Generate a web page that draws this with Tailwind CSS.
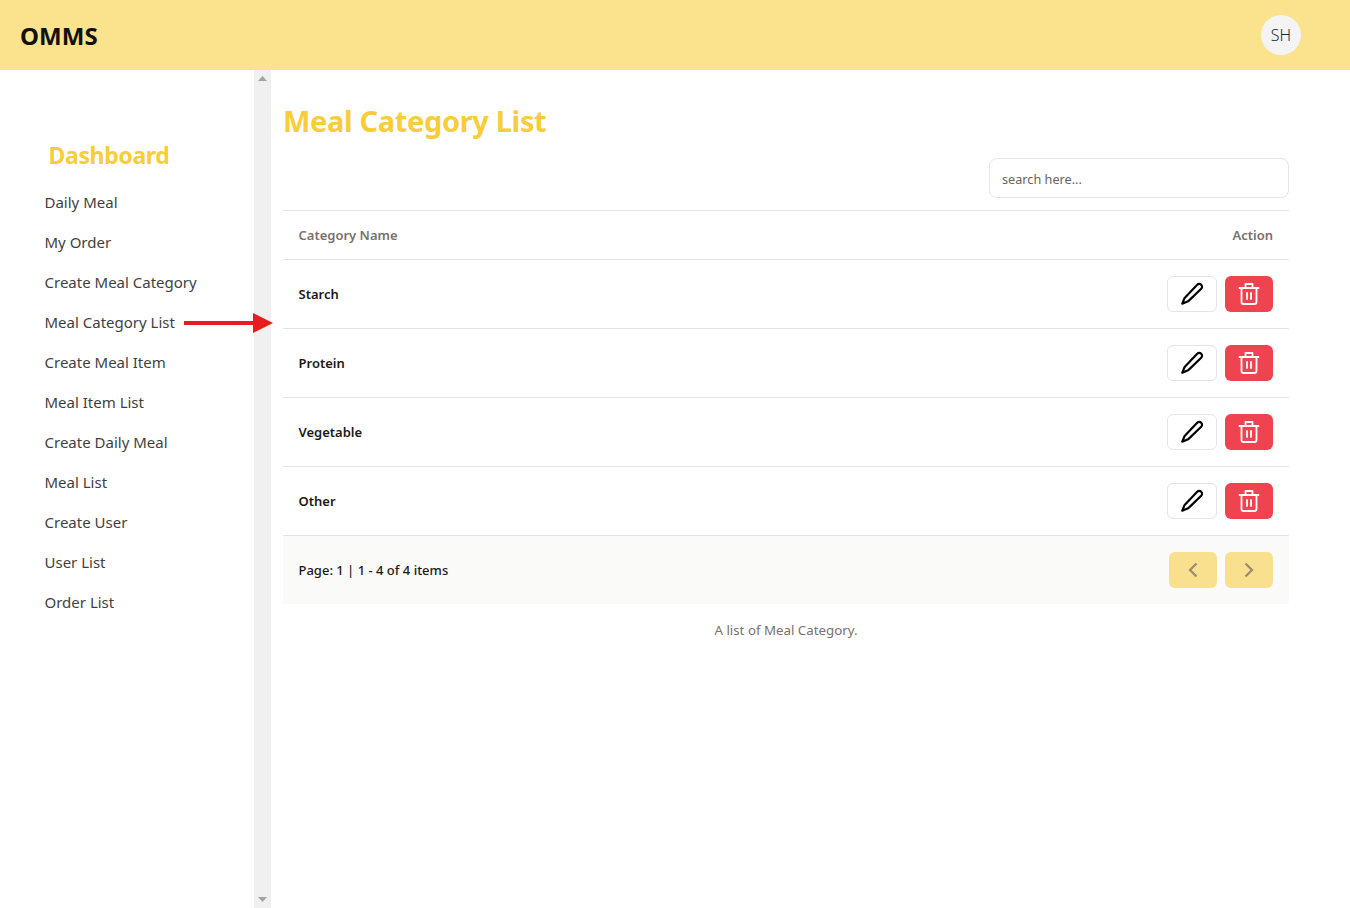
<!DOCTYPE html>
<html><head><meta charset="utf-8"><script src="https://cdn.jsdelivr.net/npm/@tailwindcss/browser@4"></script></head>
<body class="font-['Noto_Sans',sans-serif] bg-white">
<div class="relative w-[1350px] h-[908px] overflow-hidden flex flex-col">
  <header class="h-[70px] bg-[#fbe28c] flex items-center justify-between pl-[20px] pr-[49px] shrink-0">
    <span class="mt-[2px] text-[24px] tracking-[0.1px] font-bold text-[#111]">OMMS</span>
    <div class="w-10 h-10 rounded-full bg-[#f4f4f4] flex items-center justify-center text-[16px] font-light text-[#1f2937]">SH</div>
  </header>
  <div class="flex flex-1 min-h-0">
    <aside class="w-[254px] shrink-0 pt-[69px] pl-[44.5px]">
      <h2 class="pl-[4px] text-[23px] tracking-[-0.35px] leading-[32px] font-bold text-[#f8cd38] mb-[11px]">Dashboard</h2>
      <nav class="flex flex-col text-[15px] text-[#3f3f3f]">
        <a class="h-10 flex items-center">Daily Meal</a>
        <a class="h-10 flex items-center">My Order</a>
        <a class="h-10 flex items-center">Create Meal Category</a>
        <a class="h-10 flex items-center">Meal Category List</a>
        <a class="h-10 flex items-center">Create Meal Item</a>
        <a class="h-10 flex items-center">Meal Item List</a>
        <a class="h-10 flex items-center">Create Daily Meal</a>
        <a class="h-10 flex items-center">Meal List</a>
        <a class="h-10 flex items-center">Create User</a>
        <a class="h-10 flex items-center">User List</a>
        <a class="h-10 flex items-center">Order List</a>
      </nav>
    </aside>
    <div class="w-[17px] shrink-0 bg-[#f0f0f0] flex flex-col items-center justify-between py-[6px]">
      <svg width="9" height="5" viewBox="0 0 9 5"><path d="M4.5 0 9 5H0z" fill="#a3a3a3"/></svg>
      <svg width="9" height="5" viewBox="0 0 9 5"><path d="M4.5 5 9 0H0z" fill="#a3a3a3"/></svg>
    </div>
    <main class="flex-1 pl-[12px] pr-[61px] pt-[31px]">
      <h1 class="text-[29px] tracking-[-0.35px] leading-[40px] font-bold text-[#f8cd38]">Meal Category List</h1>
      <div class="flex justify-end mt-[17px] pb-[12px] border-b border-[#e5e5e5]">
        <input class="w-[300px] h-10 px-3 pt-[2px] rounded-lg border border-[#e5e5e5] text-[12.7px] placeholder:text-[#6b625a] outline-none" placeholder="search here...">
      </div>
      <div class="h-[49px] flex items-center justify-between pl-[15.5px] pr-4 border-b border-[#e5e5e5] text-[13px] font-semibold text-[#78716c]">
        <span class="mt-[2px]">Category Name</span><span class="mt-[2px]">Action</span>
      </div>
      <div class="h-[69px] flex items-center justify-between pl-[15.5px] pr-4 border-b border-[#e5e5e5] text-[13px] font-semibold text-[#1c1917]">
        <span class="mt-[2px]">Starch</span>
        <div class="flex gap-2">
          <button class="w-[50px] h-9 rounded-md border border-[#e5e5e5] bg-white flex items-center justify-center"><svg width="26" height="26" viewBox="0 0 24 24" fill="none" stroke="#000" stroke-width="2" stroke-linecap="round" stroke-linejoin="round"><path d="M20.5 3.5a2.6 2.6 0 0 0-3.7 0L5.2 15.6 3 21l5.4-2.2L20.5 7.2a2.6 2.6 0 0 0 0-3.7z"/></svg></button>
          <button class="w-12 h-9 rounded-md bg-[#ef4450] flex items-center justify-center"><svg width="24" height="24" viewBox="0 0 24 24" fill="none" stroke="#fff" stroke-width="1.8" stroke-linecap="round" stroke-linejoin="round"><path d="M2.5 6h19M8.500 6V2h7v4M4.500 6v14a2 2 0 0 0 2 2h11a2 2 0 0 0 2-2V6M10 11v6M14 11v6"/></svg></button>
        </div>
      </div>
      <div class="h-[69px] flex items-center justify-between pl-[15.5px] pr-4 border-b border-[#e5e5e5] text-[13px] font-semibold text-[#1c1917]">
        <span class="mt-[2px]">Protein</span>
        <div class="flex gap-2">
          <button class="w-[50px] h-9 rounded-md border border-[#e5e5e5] bg-white flex items-center justify-center"><svg width="26" height="26" viewBox="0 0 24 24" fill="none" stroke="#000" stroke-width="2" stroke-linecap="round" stroke-linejoin="round"><path d="M20.5 3.5a2.6 2.6 0 0 0-3.7 0L5.2 15.6 3 21l5.4-2.2L20.5 7.2a2.6 2.6 0 0 0 0-3.7z"/></svg></button>
          <button class="w-12 h-9 rounded-md bg-[#ef4450] flex items-center justify-center"><svg width="24" height="24" viewBox="0 0 24 24" fill="none" stroke="#fff" stroke-width="1.8" stroke-linecap="round" stroke-linejoin="round"><path d="M2.5 6h19M8.500 6V2h7v4M4.500 6v14a2 2 0 0 0 2 2h11a2 2 0 0 0 2-2V6M10 11v6M14 11v6"/></svg></button>
        </div>
      </div>
      <div class="h-[69px] flex items-center justify-between pl-[15.5px] pr-4 border-b border-[#e5e5e5] text-[13px] font-semibold text-[#1c1917]">
        <span class="mt-[2px]">Vegetable</span>
        <div class="flex gap-2">
          <button class="w-[50px] h-9 rounded-md border border-[#e5e5e5] bg-white flex items-center justify-center"><svg width="26" height="26" viewBox="0 0 24 24" fill="none" stroke="#000" stroke-width="2" stroke-linecap="round" stroke-linejoin="round"><path d="M20.5 3.5a2.6 2.6 0 0 0-3.7 0L5.2 15.6 3 21l5.4-2.2L20.5 7.2a2.6 2.6 0 0 0 0-3.7z"/></svg></button>
          <button class="w-12 h-9 rounded-md bg-[#ef4450] flex items-center justify-center"><svg width="24" height="24" viewBox="0 0 24 24" fill="none" stroke="#fff" stroke-width="1.8" stroke-linecap="round" stroke-linejoin="round"><path d="M2.5 6h19M8.500 6V2h7v4M4.500 6v14a2 2 0 0 0 2 2h11a2 2 0 0 0 2-2V6M10 11v6M14 11v6"/></svg></button>
        </div>
      </div>
      <div class="h-[69px] flex items-center justify-between pl-[15.5px] pr-4 border-b border-[#e5e5e5] text-[13px] font-semibold text-[#1c1917]">
        <span class="mt-[2px]">Other</span>
        <div class="flex gap-2">
          <button class="w-[50px] h-9 rounded-md border border-[#e5e5e5] bg-white flex items-center justify-center"><svg width="26" height="26" viewBox="0 0 24 24" fill="none" stroke="#000" stroke-width="2" stroke-linecap="round" stroke-linejoin="round"><path d="M20.5 3.5a2.6 2.6 0 0 0-3.7 0L5.2 15.6 3 21l5.4-2.2L20.5 7.2a2.6 2.6 0 0 0 0-3.7z"/></svg></button>
          <button class="w-12 h-9 rounded-md bg-[#ef4450] flex items-center justify-center"><svg width="24" height="24" viewBox="0 0 24 24" fill="none" stroke="#fff" stroke-width="1.8" stroke-linecap="round" stroke-linejoin="round"><path d="M2.5 6h19M8.500 6V2h7v4M4.500 6v14a2 2 0 0 0 2 2h11a2 2 0 0 0 2-2V6M10 11v6M14 11v6"/></svg></button>
        </div>
      </div>
      <div class="h-[68px] flex items-center justify-between pl-[15.5px] pr-4 bg-[#fafaf9] text-[13px] font-medium text-[#1c1917]">
        <span class="mt-[2px]">Page: 1 | 1 - 4 of 4 items</span>
        <div class="flex gap-2">
          <button class="w-12 h-9 rounded-md bg-[#f9e08f] flex items-center justify-center"><svg width="24" height="24" viewBox="0 0 24 24" fill="none" stroke="#9a8a70" stroke-width="2.200"><path d="M15.500 5.500 9 12l6.500 6.500"/></svg></button>
          <button class="w-12 h-9 rounded-md bg-[#f9e08f] flex items-center justify-center"><svg width="24" height="24" viewBox="0 0 24 24" fill="none" stroke="#9a8a70" stroke-width="2.200"><path d="M8.500 5.500 15 12l-6.500 6.500"/></svg></button>
        </div>
      </div>
      <p class="mt-[16px] text-center text-[13.300px] leading-[20px] text-[#78716c]">A list of Meal Category.</p>
    </main>
  </div>
  <svg class="absolute left-[184px] top-[313px]" width="90" height="20" viewBox="0 0 90 20"><path d="M0 8h70v4H0z" fill="#e81c1c"/><path d="M69 0l20 10-20 10z" fill="#e81c1c"/></svg>
</div>
</body></html>
